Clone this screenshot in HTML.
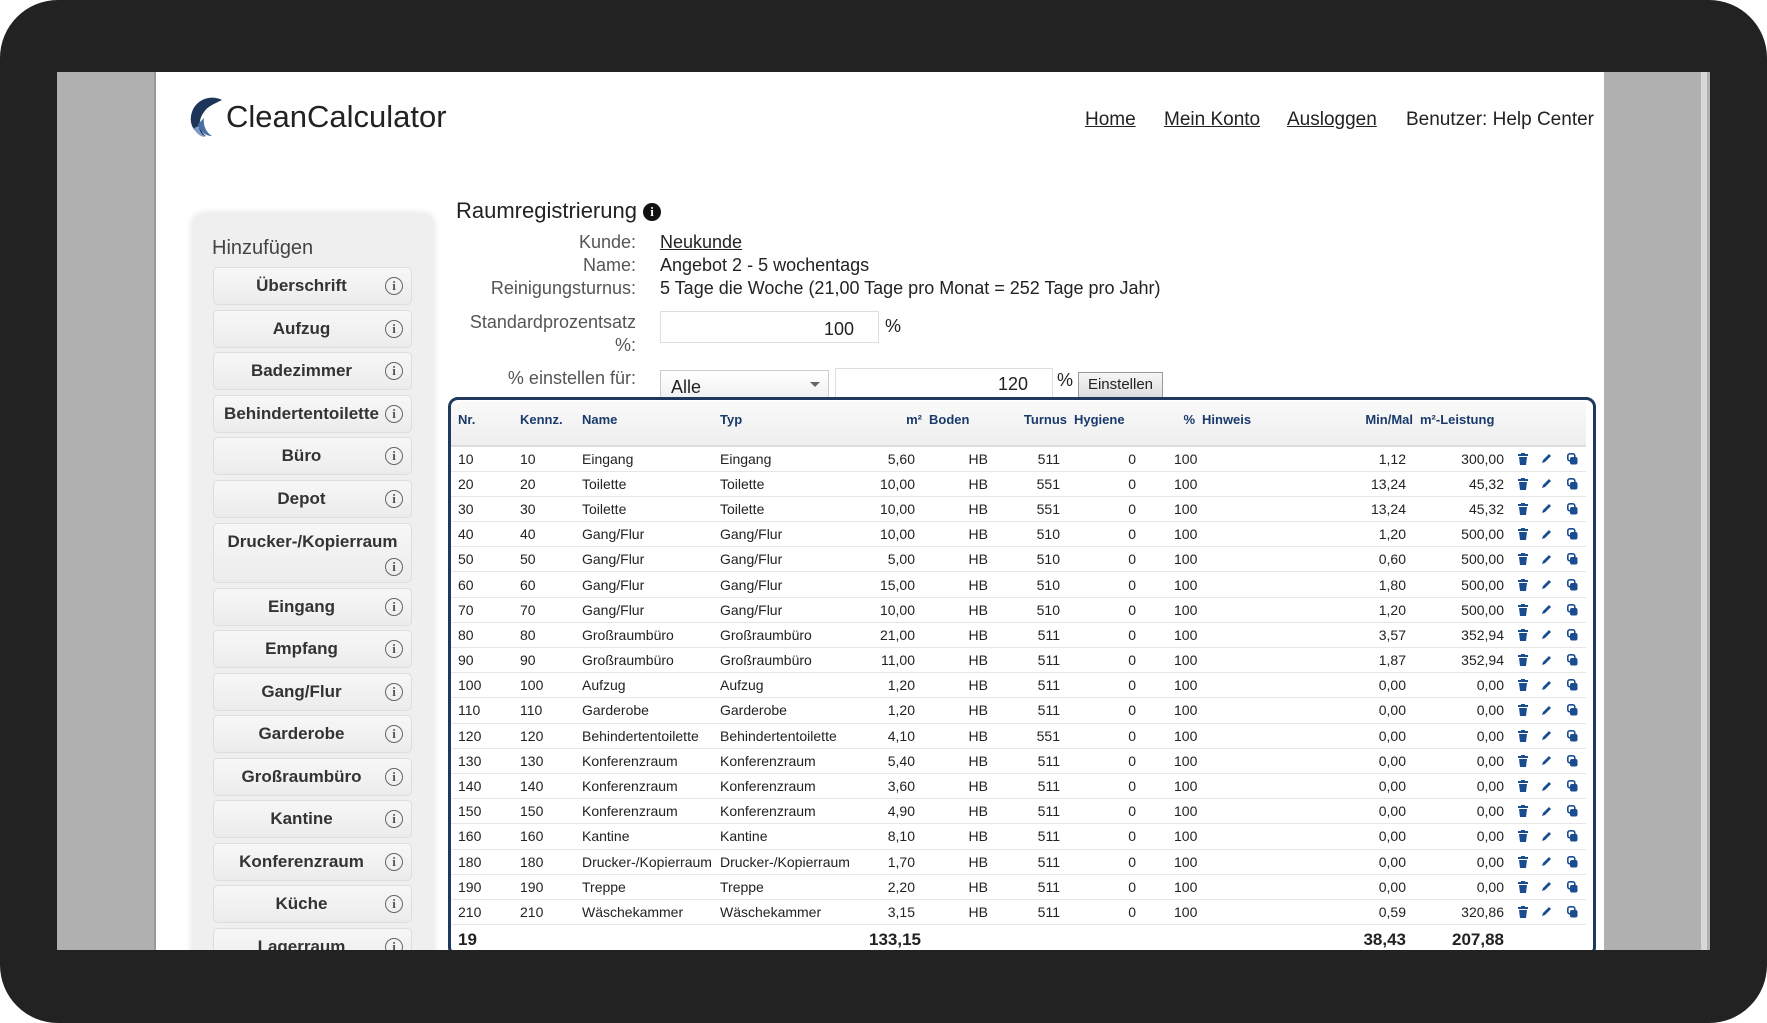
<!DOCTYPE html>
<html><head><meta charset="utf-8"><style>
*{box-sizing:border-box;margin:0;padding:0}
body{width:1767px;height:1023px;background:#fff;font-family:"Liberation Sans",sans-serif;overflow:hidden;position:relative;color:#222}
.frame{position:absolute;left:0;top:0;width:1767px;height:1023px;background:#222;border-radius:58px}
.screen{position:absolute;left:57px;top:72px;width:1653px;height:878px;background:#b0b0b0;overflow:hidden}
.rline{position:absolute;left:1644px;top:0;width:6px;height:878px;background:#d8d8d8}
.page{position:absolute;left:97px;top:0;width:1450px;height:878px;background:#fff;border-left:2px solid #999}
.a{position:absolute;white-space:nowrap}
.nav{font-size:19px;color:#222;top:37px}
.nav u{text-decoration:underline}
.side{position:absolute;left:37px;top:142px;width:240px;height:760px;background:#efefef;border-radius:10px;box-shadow:0 0 8px rgba(0,0,0,.15)}
.btn{position:absolute;left:20px;width:199px;height:38px;border:1px solid #ddd;border-radius:5px;background:linear-gradient(#f7f7f7,#ececec);font-weight:bold;font-size:17px;color:#333;text-align:center;line-height:36px;padding-right:22px}
.btn i{position:absolute;right:8px;top:9px;width:18px;height:18px;border:1.5px solid #666;border-radius:50%;font-style:normal;font-family:"Liberation Serif",serif;font-size:13px;line-height:15px;text-align:center;padding:0;color:#555;font-weight:bold}
.lbl{font-size:18px;color:#555;text-align:right;right:968px}
.val{font-size:18px;color:#222;left:504px}
.tbl{position:absolute;left:292px;top:325px;width:1148px;height:560px;border:3px solid #1f3a5c;border-radius:10px;background:#fff;overflow:hidden}
table{border-collapse:collapse;table-layout:fixed;position:absolute;left:0;top:1px;font-size:14px;color:#222}
th{height:45px;font-size:13px;color:#1a3a6b;text-align:left;padding:0 0 7px 7px;background:linear-gradient(#fafafa,#eee);border-bottom:2px solid #ddd;white-space:nowrap}
td{height:25.2px;border-top:1px solid #e6e6e6;padding:0 7px;white-space:nowrap;overflow:visible}
.r{text-align:right}
tfoot td{font-weight:bold;font-size:17px;height:30px}
svg{display:block;margin:0 auto}
</style></head><body>
<div class="frame"></div>
<div class="screen">
<div class="rline"></div>
<div class="page">
 <svg class="a" style="left:32px;top:22px" width="36" height="44" viewBox="0 0 36 44"><path d="M34 6C22 0 8 6 4 18c-4 12 2 22 14 24-8-6-8-16-2-24 4-6 10-8 18-12z" fill="#1d3558"/><path d="M10 30c2 8 8 12 14 12-6-4-9-10-8-18z" fill="#4a6fa5"/><path d="M6 34c2 6 7 9 12 9-4-2-7-6-7-11z" fill="#7f9cc8"/></svg>
 <div class="a" style="left:70px;top:27px;font-size:31px;color:#222">CleanCalculator</div>
 <div class="a nav" style="left:929px"><u>Home</u></div>
 <div class="a nav" style="left:1008px"><u>Mein Konto</u></div>
 <div class="a nav" style="left:1131px"><u>Ausloggen</u></div>
 <div class="a nav" style="left:1250px">Benutzer: Help Center</div>

 <div class="side">
  <div class="a" style="left:19px;top:23px;font-size:20px;color:#444">Hinzufügen</div>
  <div class="btn" style="top:53px">Überschrift<i>i</i></div>
  <div class="btn" style="top:96px">Aufzug<i>i</i></div>
  <div class="btn" style="top:138px">Badezimmer<i>i</i></div>
  <div class="btn" style="top:181px">Behindertentoilette<i>i</i></div>
  <div class="btn" style="top:223px">Büro<i>i</i></div>
  <div class="btn" style="top:266px">Depot<i>i</i></div>
  <div class="btn" style="top:309px;height:60px;padding-right:0">Drucker-/Kopierraum<i style="top:34px">i</i></div>
  <div class="btn" style="top:374px">Eingang<i>i</i></div>
  <div class="btn" style="top:416px">Empfang<i>i</i></div>
  <div class="btn" style="top:459px">Gang/Flur<i>i</i></div>
  <div class="btn" style="top:501px">Garderobe<i>i</i></div>
  <div class="btn" style="top:544px">Großraumbüro<i>i</i></div>
  <div class="btn" style="top:586px">Kantine<i>i</i></div>
  <div class="btn" style="top:629px">Konferenzraum<i>i</i></div>
  <div class="btn" style="top:671px">Küche<i>i</i></div>
  <div class="btn" style="top:714px">Lagerraum<i>i</i></div>
 </div>

 <div class="a" style="left:300px;top:126px;font-size:22px;color:#222">Raumregistrierung <span style="display:inline-block;width:18px;height:18px;border-radius:50%;background:#111;color:#fff;font-size:13px;font-weight:bold;text-align:center;line-height:18px;font-family:'Liberation Serif',serif;vertical-align:2px">i</span></div>
 <div class="a lbl" style="top:160px">Kunde:</div><div class="a val" style="top:160px"><u>Neukunde</u></div>
 <div class="a lbl" style="top:183px">Name:</div><div class="a val" style="top:183px">Angebot 2 - 5 wochentags</div>
 <div class="a lbl" style="top:206px">Reinigungsturnus:</div><div class="a val" style="top:206px">5 Tage die Woche (21,00 Tage pro Monat = 252 Tage pro Jahr)</div>
 <div class="a lbl" style="top:239px;line-height:23px">Standardprozentsatz<br>%:</div>
 <div class="a" style="left:504px;top:239px;width:219px;height:32px;border:1px solid #ddd;font-size:18px;text-align:right;padding:7px 24px 0 0">100</div>
 <div class="a val" style="top:244px;left:729px">%</div>
 <div class="a lbl" style="top:296px">% einstellen für:</div>
 <div class="a" style="left:504px;top:298px;width:169px;height:30px;border:1px solid #ccc;background:linear-gradient(#fff,#f0f0f0);font-size:18px;padding:6px 10px">Alle<span style="position:absolute;right:8px;top:11px;border:5px solid transparent;border-top:5px solid #666"></span></div>
 <div class="a" style="left:679px;top:296px;width:218px;height:30px;border:1px solid #ddd;font-size:18px;text-align:right;padding:5px 24px 0 0">120</div>
 <div class="a val" style="top:298px;left:901px">%</div>
 <div class="a" style="left:922px;top:300px;width:85px;height:26px;border:1px solid #999;background:linear-gradient(#f6f6f6,#ddd);font-size:15px;text-align:center;line-height:24px">Einstellen</div>

 <div class="tbl">
 <table style="width:1135px">
 <colgroup><col style="width:62px"><col style="width:62px"><col style="width:138px"><col style="width:149px"><col style="width:60px"><col style="width:73px"><col style="width:72px"><col style="width:76px"><col style="width:54px"><col style="width:145px"><col style="width:71px"><col style="width:98px"><col style="width:23px"><col style="width:24px"><col style="width:28px"></colgroup>
 <thead><tr><th>Nr.</th><th>Kennz.</th><th>Name</th><th>Typ</th><th class="r">m²</th><th>Boden</th><th class="r">Turnus</th><th>Hygiene</th><th class="r" style="padding-right:2px">%</th><th style="padding-left:5px">Hinweis</th><th class="r">Min/Mal</th><th>m²-Leistung</th><th></th><th></th><th></th></tr></thead>
 <tbody id="tb"></tbody>
 <tfoot><tr><td>19</td><td></td><td></td><td></td><td class="r">133,15</td><td></td><td></td><td></td><td></td><td></td><td class="r">38,43</td><td class="r">207,88</td><td></td><td></td><td></td></tr></tfoot>
 </table>
 </div>
</div>
</div>
<script>
var d=[[10,"Eingang","5,60",511,"1,12","300,00"],[20,"Toilette","10,00",551,"13,24","45,32"],[30,"Toilette","10,00",551,"13,24","45,32"],[40,"Gang/Flur","10,00",510,"1,20","500,00"],[50,"Gang/Flur","5,00",510,"0,60","500,00"],[60,"Gang/Flur","15,00",510,"1,80","500,00"],[70,"Gang/Flur","10,00",510,"1,20","500,00"],[80,"Großraumbüro","21,00",511,"3,57","352,94"],[90,"Großraumbüro","11,00",511,"1,87","352,94"],[100,"Aufzug","1,20",511,"0,00","0,00"],[110,"Garderobe","1,20",511,"0,00","0,00"],[120,"Behindertentoilette","4,10",551,"0,00","0,00"],[130,"Konferenzraum","5,40",511,"0,00","0,00"],[140,"Konferenzraum","3,60",511,"0,00","0,00"],[150,"Konferenzraum","4,90",511,"0,00","0,00"],[160,"Kantine","8,10",511,"0,00","0,00"],[180,"Drucker-/Kopierraum","1,70",511,"0,00","0,00"],[190,"Treppe","2,20",511,"0,00","0,00"],[210,"Wäschekammer","3,15",511,"0,59","320,86"]];
var tr='<svg width="10" height="12" viewBox="0 0 10 12"><rect x="0" y="1" width="10" height="2" fill="#1a4d8f"/><rect x="3" y="0" width="4" height="1.5" fill="#1a4d8f"/><path d="M1 4h8l-1 8H2z" fill="#1a4d8f"/></svg>';
var pe='<svg width="11" height="11" viewBox="0 0 11 11"><path d="M1 10l1-3 6-6 2 2-6 6z" fill="#1a4d8f"/></svg>';
var cp='<svg width="11" height="12" viewBox="0 0 11 12"><rect x="0.8" y="0.8" width="7" height="7" rx="2" fill="none" stroke="#1a4d8f" stroke-width="1.6"/><rect x="3" y="4" width="7.5" height="7.5" rx="2" fill="#1a4d8f"/></svg>';
var h='';d.forEach(function(r){h+='<tr><td>'+r[0]+'</td><td>'+r[0]+'</td><td>'+r[1]+'</td><td>'+r[1]+'</td><td class="r">'+r[2]+'</td><td class="r">HB</td><td class="r">'+r[3]+'</td><td class="r">0</td><td class="r" style="text-align:left;padding-left:31px">100</td><td></td><td class="r">'+r[4]+'</td><td class="r">'+r[5]+'</td><td style="padding:0">'+tr+'</td><td style="padding:0">'+pe+'</td><td style="padding:0">'+cp+'</td></tr>'});
document.getElementById('tb').innerHTML=h;
</script>
</body></html>
